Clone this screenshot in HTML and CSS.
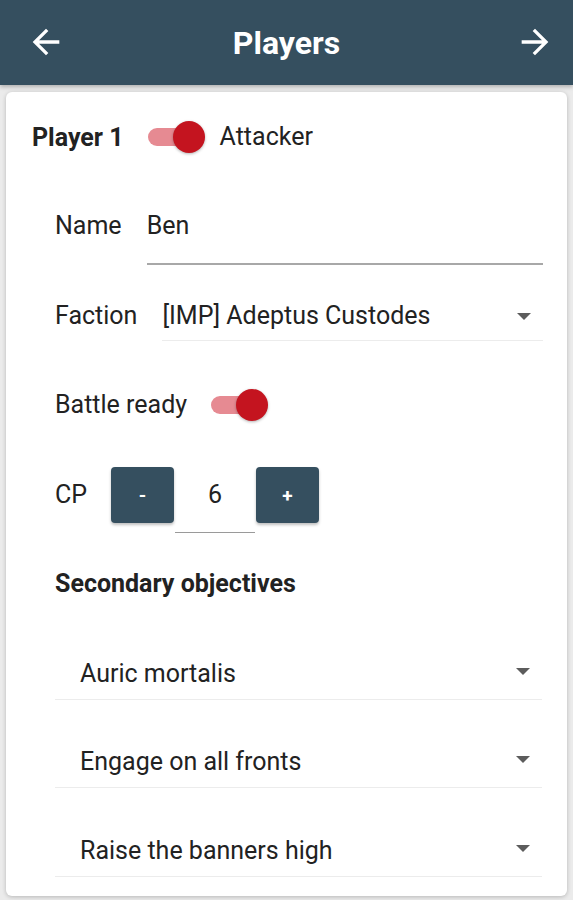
FILE: index.html
```html
<!DOCTYPE html>
<html lang="en">
<head>
<meta charset="utf-8">
<title>Players</title>
<link rel="stylesheet" href="styles.css">
</head>
<body>
<header class="topbar">
  <span class="nav nav-back">
    <svg viewBox="0 0 24 24" width="40" height="40"><path fill="#fff" d="M20 11H7.830l5.59-5.590L12 4l-8 8 8 8 1.41-1.41L7.83 13H20v-2z"/></svg>
  </span>
  <h1 class="title">Players</h1>
  <span class="nav nav-fwd">
    <svg viewBox="0 0 24 24" width="40" height="40"><path fill="#fff" d="M12 4l-1.41 1.41L16.17 11H4v2h12.17l-5.58 5.59L12 20l8-8z"/></svg>
  </span>
</header>
<main class="page">
  <section class="card">
    <div class="player-row">
      <span class="player-label">Player 1</span>
      <span class="switch"><span class="track"></span><span class="thumb"></span></span>
      <span class="text">Attacker</span>
    </div>

    <div class="field field-name">
      <span class="label">Name</span>
      <div class="input"><span class="text">Ben</span></div>
    </div>

    <div class="field field-faction">
      <span class="label">Faction</span>
      <div class="select select-faction"><span class="text">[IMP] Adeptus Custodes</span><span class="caret"></span></div>
    </div>

    <div class="field field-ready">
      <span class="label">Battle ready</span>
      <span class="switch switch-ready"><span class="track"></span><span class="thumb"></span></span>
    </div>

    <div class="field field-cp">
      <span class="label">CP</span>
      <div class="stepper">
        <span class="step-btn">-</span>
        <span class="step-value">6</span>
        <span class="step-btn">+</span>
      </div>
    </div>

    <h2 class="section-title">Secondary objectives</h2>

    <div class="select select-obj obj-1"><span class="text">Auric mortalis</span><span class="caret"></span></div>
    <div class="select select-obj obj-2"><span class="text">Engage on all fronts</span><span class="caret"></span></div>
    <div class="select select-obj obj-3"><span class="text">Raise the banners high</span><span class="caret"></span></div>
  </section>
</main>
</body>
</html>
```

FILE: styles.css
```css
* { box-sizing: border-box; }

html, body {
  margin: 0;
  padding: 0;
}

body {
  background: #ebebeb;
  font-family: Roboto, "Noto Sans", sans-serif;
  color: #222;
  width: 573px;
  height: 900px;
  overflow: hidden;
}

.topbar {
  height: 85px;
  background: #354f5f;
  display: grid;
  grid-template-columns: 1fr auto 1fr;
  align-items: center;
  padding: 0 18px 0 26px;
  box-shadow: 0 2px 4px rgba(0,0,0,0.25);
  position: relative;
  z-index: 1;
}

.nav {
  display: flex;
  width: 40px;
  height: 40px;
  margin-bottom: 1px;
}
.nav svg { display: block; }
.nav-back { justify-self: start; }
.nav-fwd { justify-self: end; }

.title {
  margin: 0 8px 0 0;
  color: #fff;
  font-size: 32px;
  font-weight: 700;
  line-height: 40px;
  padding-top: 0;
}

.page {
  padding: 7px 6px 0;
}

.card {
  background: #fff;
  border-radius: 6px;
  box-shadow: 0 1px 4px rgba(0,0,0,0.22);
  padding: 25px 24px 19px 26px;
  font-size: 25px;
}

.text { line-height: 40px; }

.player-row {
  display: flex;
  align-items: center;
  height: 40px;
}
.player-label {
  font-weight: 700;
  margin-right: 24px;
}

.switch {
  position: relative;
  width: 57px;
  height: 32px;
  flex: none;
  margin-right: 15px;
}
.switch .track {
  position: absolute;
  left: 0;
  top: 7px;
  width: 50px;
  height: 18px;
  border-radius: 9px;
  background: #e68a92;
}
.switch .thumb {
  position: absolute;
  right: 0;
  top: 0;
  width: 32px;
  height: 32px;
  border-radius: 50%;
  background: #c4141f;
  box-shadow: 0 1px 3px rgba(0,0,0,0.3);
}

.field {
  display: flex;
  align-items: flex-start;
  margin-left: 23px;
  gap: 25px;
}
.field .label {
  line-height: 40px;
  white-space: nowrap;
}

.field-name { margin-top: 49px; }
.input {
  flex: 1;
  height: 59px;
  padding-bottom: 17px;
  border-bottom: 2px solid #a8a8a8;
}

.field-faction { margin-top: 31px; }
.select {
  display: flex;
  align-items: center;
  justify-content: space-between;
  border-bottom: 1px solid #ececec;
  padding-right: 12px;
}
.select-faction {
  flex: 1;
  height: 45px;
  padding-bottom: 4px;
  align-items: flex-start;
}
.caret {
  width: 0;
  height: 0;
  border-left: 7px solid transparent;
  border-right: 7px solid transparent;
  border-top: 7px solid #5c5c5c;
  align-self: center;
}

.field-ready {
  margin-top: 44px;
  gap: 24px;
}
.field-ready .switch { margin-top: 4px; margin-right: 0; }

.field-cp {
  margin-top: 42px;
  align-items: center;
  gap: 24px;
}
.stepper {
  display: flex;
  align-items: flex-start;
  height: 66px;
}
.step-btn {
  width: 63px;
  height: 56px;
  background: #354f5f;
  color: #fff;
  border-radius: 4px;
  display: flex;
  align-items: center;
  justify-content: center;
  font-size: 19px;
  font-weight: 700;
  box-shadow: 0 2px 3px rgba(0,0,0,0.25);
}
.step-value {
  width: 80px;
  height: 66px;
  margin: 0 1px;
  text-align: center;
  line-height: 56px;
  border-bottom: 1px solid #9a9a9a;
}
.field-cp .label { align-self: flex-start; line-height: 56px; }

.section-title {
  margin: 36px 0 0 23px;
  font-size: 25px;
  font-weight: 700;
  line-height: 30px;
}

.select-obj {
  margin-left: 23px;
  margin-right: 1px;
  height: 46px;
  padding-left: 25px;
  padding-bottom: 5px;
  align-items: flex-start;
}
.select-obj .caret { margin-top: -5px; }
.obj-1 { margin-top: 55px; }
.obj-2 { margin-top: 42px; }
.obj-3 { margin-top: 43px; }
```
